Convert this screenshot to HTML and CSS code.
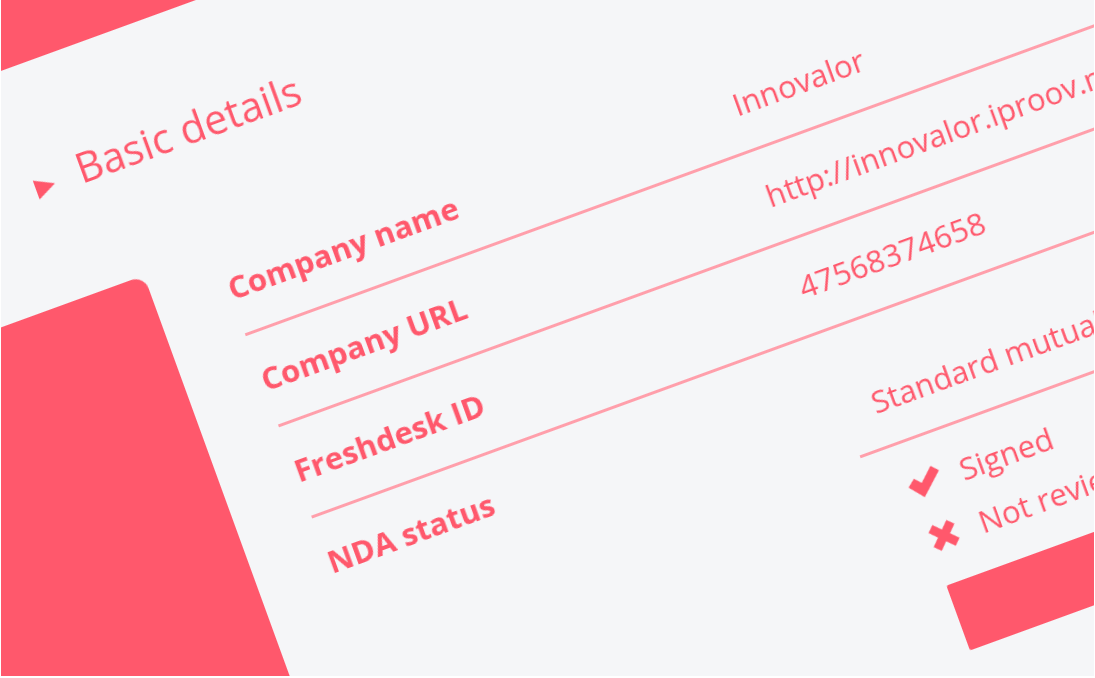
FILE: index.html
```html
<!DOCTYPE html>
<html lang="en">
<head>
  <meta charset="UTF-8">
  <title>Basic details</title>
  <link rel="stylesheet" href="styles.css">
</head>
<body>
  <div class="stage">
    <div class="sheet">
      <div class="topbar"></div>

      <div class="section-title">
        <span class="arrow"></span>
        <h2>Basic details</h2>
      </div>

      <div class="content">
        <div class="sidebar"></div>

        <div class="details">
          <div class="row">
            <div class="label">Company name</div>
            <div class="value">Innovalor</div>
          </div>
          <div class="row">
            <div class="label">Company URL</div>
            <div class="value">http://innovalor.iproov.me</div>
          </div>
          <div class="row">
            <div class="label">Freshdesk ID</div>
            <div class="value">47568374658</div>
          </div>
          <div class="row row-last">
            <div class="label">NDA status</div>
            <div class="value-stack">
              <div class="value nda-type">Standard mutual NDA</div>
              <div class="status-list">
                <div class="status">
                  <svg class="icon" viewBox="0 0 34 28"><path d="M0 13 8 6.500 14 13 28 0 34.500 7 12 27.500Z"/></svg>
                  <span>Signed</span>
                </div>
                <div class="status">
                  <svg class="icon" viewBox="0 0 34 28"><path d="M12.500-1h9v10.500H32v9H21.500V29h-9V18.500H2v-9h10.500Z" transform="rotate(45 17 14)"/></svg>
                  <span>Not reviewed</span>
                </div>
              </div>
              <button class="action" type="button"></button>
            </div>
          </div>
        </div>
      </div>
    </div>
  </div>
</body>
</html>
```

FILE: styles.css
```css
/* Reset some default styles */
body, h2 {
  margin: 0;
  padding: 0;
}

body {
  font-family: "Open Sans", "Liberation Sans", sans-serif;
  background-color: #fff;
  color: #ff586c;
}

/* The whole screen is tilted, so it sits on its own canvas */
.stage {
  position: relative;
  width: calc(100vw - 2px);
  height: calc(100vh - 2px);
  margin-left: 1px;
  overflow: hidden;
  background-color: #f5f6f8;
}
.sheet {
  position: absolute;
  top: 0;
  left: -1px;
  width: 1700px;
  height: 1200px;
  transform-origin: 0 0;
  transform: rotate(-20deg) translate(-300px, -60px);
  filter: blur(0.6px);
}

.topbar {
  height: 126.7px;
  background-color: #ff586c;
}

.section-title {
  display: flex;
  align-items: flex-start;
  gap: 25px;
  height: 143px;
  padding: 91px 0 0 269px;
}
.section-title h2 {
  font-size: 41.3px;
  font-weight: 400;
  line-height: 54px;
}
.arrow {
  width: 0;
  height: 0;
  margin-top: 23px;
  border-left: 20px solid #ff586c;
  border-top: 10.5px solid transparent;
  border-bottom: 10.5px solid transparent;
}

.content {
  display: flex;
  align-items: flex-start;
}
.sidebar {
  flex: none;
  width: 341px;
  height: 900px;
  margin-top: 7.4px;
  background-color: #ff586c;
  border-top-right-radius: 14px;
}

.details {
  flex: 1;
  margin: 2px 0 0 75px;
}
.row {
  display: flex;
  padding: 25px 0 25px;
  border-bottom: 3px solid #ff9fab;
}
.row-last {
  border-bottom: none;
}
.label {
  flex: none;
  width: 537px;
  font-size: 31.2px;
  font-weight: 700;
  line-height: 44px;
}
.value {
  font-size: 31.2px;
  font-weight: 400;
  line-height: 44px;
  white-space: nowrap;
}

.value-stack {
  flex: 1;
  margin-left: -1.5px;
}
.nda-type {
  padding: 36px 0 23px 30px;
  border-bottom: 3px solid #ff9fab;
}
.status-list {
  display: flex;
  flex-direction: column;
  gap: 12px;
  padding: 23px 0 0 35px;
}
.status {
  display: flex;
  align-items: center;
  gap: 21px;
  font-size: 31.2px;
  font-weight: 400;
  line-height: 44px;
}
.icon {
  width: 34px;
  height: 28px;
  fill: #ff586c;
  overflow: visible;
}
.action {
  display: block;
  width: 500px;
  height: 69px;
  margin: 26px 0 0 37px;
  background-color: #ff586c;
  border: none;
  border-radius: 2px;
}
```
